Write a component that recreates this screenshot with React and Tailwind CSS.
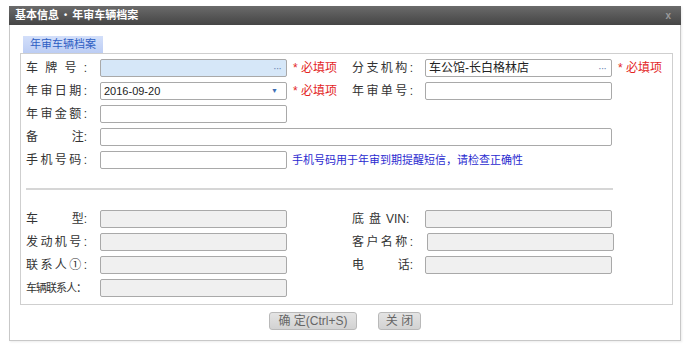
import React from 'react';

const font = { fontFamily: '"Liberation Sans", "Noto Sans CJK SC", sans-serif' };

function Spread({ chars }) {
    // label whose characters are stretched over the label column
    return (
        <div className="flex w-[61px] justify-between">
            {chars.map((c, i) => (
                <span key={i}>{c}</span>
            ))}
        </div>
    );
}

function Field({ w = 'w-[187px]', bg = 'bg-white', children, extra = '' }) {
    return (
        <div className={'h-[18px] flex-none border border-[#a9a9a9] rounded-[2px] flex items-center px-[3px] text-[12px] text-[#222] ' + w + ' ' + bg + ' ' + extra}>
            {children}
        </div>
    );
}

function Dots() {
    return <span className="ml-auto mr-[2px] text-[11px] leading-none text-[#7088b4] tracking-[-1px]">···</span>;
}

function Required() {
    return <span className="text-[#e3261f] text-[12px] whitespace-nowrap">* 必填项</span>;
}

export default function App() {
    const disabled = 'bg-[#f0f0f0]';
    return (
        <div className="w-[689px] h-[350px] bg-white text-[#333] text-[12px]" style={font}>
            <div className="ml-[9px] pt-[6px] w-[672px]">
                <div className="h-[335px] border border-[#c8c8c8] shadow-[1px_1px_2px_rgba(0,0,0,0.08)] flex flex-col">
                    {/* title bar */}
                    <div className="h-[19px] -mt-px -mx-px bg-linear-to-b from-[#6b6b6b] to-[#454545] flex items-center gap-[5px] pl-[6px] pr-[10px] text-white font-bold text-[11px]">
                        <span>基本信息</span>
                        <span className="text-[9px]">•</span>
                        <span>年审车辆档案</span>
                        <span className="ml-auto text-[#9a9a9a] text-[10px]">x</span>
                    </div>

                    <div className="pl-[10px] pr-[8px] pt-[11px]">
                        <div className="ml-[3px] w-[80px] h-[17px] bg-linear-to-b from-[#d3dffa] to-[#bccdf4] flex items-center justify-center text-[11px] text-[#2f5fc4]">
                            年审车辆档案
                        </div>
                        <div className="w-[653px] h-[252px] border border-[#cfcfcf] pt-[5px] pl-[5px] flex flex-col">
                            <div className="flex flex-col gap-[5px]">
                                <div className="flex items-center h-[18px]">
                                    <div className="w-[74px]"><Spread chars={['车', '牌', '号', ':']} /></div>
                                    <Field bg="bg-[#d6e7f8]"><Dots /></Field>
                                    <div className="w-[63px] pl-[6px]"><Required /></div>
                                    <div className="w-[75px] pl-[2px]"><Spread chars={['分', '支', '机', '构', ':']} /></div>
                                    <Field>车公馆-长白格林店<Dots /></Field>
                                    <div className="pl-[6px]"><Required /></div>
                                </div>
                                <div className="flex items-center h-[18px]">
                                    <div className="w-[74px]"><Spread chars={['年', '审', '日', '期', ':']} /></div>
                                    <Field>
                                        <span className="text-[11px]">2016-09-20</span>
                                        <span className="ml-auto mr-[5px] text-[7px] text-[#3f6fb5]">▼</span>
                                    </Field>
                                    <div className="w-[63px] pl-[6px]"><Required /></div>
                                    <div className="w-[75px] pl-[2px]"><Spread chars={['年', '审', '单', '号', ':']} /></div>
                                    <Field />
                                </div>
                                <div className="flex items-center h-[18px]">
                                    <div className="w-[74px]"><Spread chars={['年', '审', '金', '额', ':']} /></div>
                                    <Field />
                                </div>
                                <div className="flex items-center h-[18px]">
                                    <div className="w-[74px]">
                                        <div className="flex w-[61px]"><span>备</span><span className="ml-auto">注:</span></div>
                                    </div>
                                    <Field w="w-[512px]" />
                                </div>
                                <div className="flex items-center h-[18px]">
                                    <div className="w-[74px]"><Spread chars={['手', '机', '号', '码', ':']} /></div>
                                    <Field />
                                    <div className="pl-[5px] text-[11px] text-[#2b2bd0] whitespace-nowrap">手机号码用于年审到期提醒短信，请检查正确性</div>
                                </div>
                            </div>

                            <div className="mt-[19px] w-[587px] h-[2px] bg-[#d6d6d6]" />

                            <div className="mt-[20px] flex flex-col gap-[5px]">
                                <div className="flex items-center h-[18px]">
                                    <div className="w-[74px]">
                                        <div className="flex w-[61px]"><span>车</span><span className="ml-auto">型:</span></div>
                                    </div>
                                    <Field bg={disabled} />
                                    <div className="w-[63px]" />
                                    <div className="w-[75px] pl-[2px] flex gap-[5px]">
                                        <span>底</span><span>盘</span><span>VIN:</span>
                                    </div>
                                    <Field bg={disabled} />
                                </div>
                                <div className="flex items-center h-[18px]">
                                    <div className="w-[74px]"><Spread chars={['发', '动', '机', '号', ':']} /></div>
                                    <Field bg={disabled} />
                                    <div className="w-[63px]" />
                                    <div className="w-[75px] pl-[2px]"><Spread chars={['客', '户', '名', '称', ':']} /></div>
                                    <Field bg={disabled} extra="ml-[2px]" />
                                </div>
                                <div className="flex items-center h-[18px]">
                                    <div className="w-[74px]"><Spread chars={['联', '系', '人', '①', ':']} /></div>
                                    <Field bg={disabled} />
                                    <div className="w-[63px]" />
                                    <div className="w-[75px] pl-[2px]">
                                        <div className="flex w-[61px]"><span>电</span><span className="ml-auto">话:</span></div>
                                    </div>
                                    <Field bg={disabled} />
                                </div>
                                <div className="flex items-center h-[18px]">
                                    <div className="w-[74px] text-[11px] tracking-[-1px]">车辆联系人：</div>
                                    <Field bg={disabled} />
                                </div>
                            </div>
                        </div>
                    </div>

                    <div className="mt-[7px] flex justify-center gap-[21px]">
                        <button className="w-[88px] h-[18px] rounded-[3px] border border-[#b9b9b9] bg-linear-to-b from-[#e4e4e4] to-[#d2d2d2] text-[12px] text-[#666] leading-none">
                            确 定(Ctrl+S)
                        </button>
                        <button className="w-[43px] h-[18px] rounded-[3px] border border-[#b9b9b9] bg-linear-to-b from-[#e4e4e4] to-[#d2d2d2] text-[12px] text-[#666] leading-none">
                            关 闭
                        </button>
                    </div>
                </div>
            </div>
        </div>
    );
}
